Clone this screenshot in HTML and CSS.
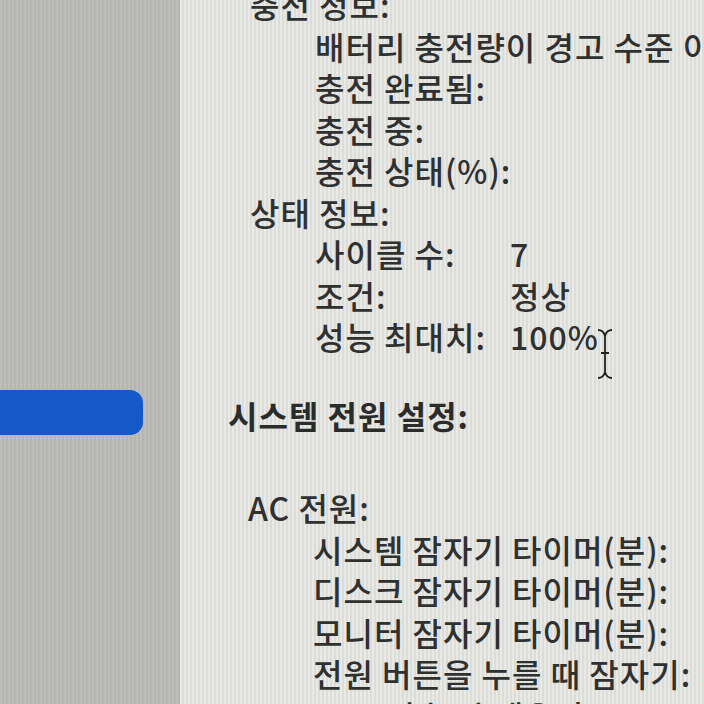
FILE: index.html
```html
<!DOCTYPE html>
<html>
<head>
    <meta charset="utf-8">
    <link rel="stylesheet" href="styles.css">
</head>
<body>
    <div class="window">
        <aside class="sidebar">
            <div class="selected"></div>
        </aside>
        <main class="content">
            <div class="group">
                <div class="head">충전 정보:</div>
                <div class="items">
                    <div class="row">배터리 충전량이 경고 수준 이하:</div>
                    <div class="row">충전 완료됨:</div>
                    <div class="row">충전 중:</div>
                    <div class="row">충전 상태(%):</div>
                </div>
            </div>
            <div class="group">
                <div class="head">상태 정보:</div>
                <div class="items">
                    <div class="row pair"><span class="label">사이클 수:</span><span>7</span></div>
                    <div class="row pair"><span class="label">조건:</span><span>정상</span></div>
                    <div class="row pair"><span class="label">성능 최대치:</span><span class="value-cursor">100%<svg class="cursor" width="18" height="52" viewBox="0 0 18 52"><path d="M2 2 C6 2 8 4 9 8 C10 4 12 2 16 2 M9 8 L9 44 M5 25 L13 25 M2 50 C6 50 8 48 9 44 C10 48 12 50 16 50" fill="none" stroke="#222" stroke-width="1.8"/></svg></span></div>
                </div>
            </div>

            <h3 class="section">시스템 전원 설정:</h3>

            <div class="group power">
                <div class="head">AC 전원:</div>
                <div class="items">
                    <div class="row">시스템 잠자기 타이머(분):</div>
                    <div class="row">디스크 잠자기 타이머(분):</div>
                    <div class="row">모니터 잠자기 타이머(분):</div>
                    <div class="row">전원 버튼을 누를 때 잠자기:</div>
                    <div class="row">LAN 접속 시 깨우기:</div>
                </div>
            </div>
        </main>
    </div>
</body>
</html>
```

FILE: styles.css
```css
  body {
      margin: 0;
      padding: 0;
      width: 704px;
      height: 704px;
      overflow: hidden;
      font-family: "Noto Sans CJK KR", "Noto Sans", sans-serif;
      color: #2f3030;
  }
  .window {
      display: flex;
      height: 704px;
  }
  .sidebar {
      width: 180px;
      flex-shrink: 0;
      background-color: #babbb9;
      background-image: repeating-linear-gradient(90deg, rgba(255,255,255,0.05) 0 2px, rgba(0,0,0,0.03) 2px 4px);
  }
  .selected {
      margin-top: 390px;
      width: 143px;
      height: 45px;
      background-color: #1559c9;
      border-radius: 0 13px 13px 0;
  }
  .content {
      flex: 1;
      background-color: #e4e4e1;
      background-image: repeating-linear-gradient(90deg, rgba(255,255,255,0.18) 0 2px, rgba(0,0,0,0.035) 2px 4px);
      padding-left: 70px;
      margin-top: -16px;
      font-size: 32px;
      font-weight: 500;
      letter-spacing: 1px;
      line-height: 41.5px;
      white-space: nowrap;
      overflow: hidden;
  }
  .items {
      padding-left: 65px;
  }
  .pair {
      display: flex;
  }
  .label {
      width: 195px;
      flex-shrink: 0;
  }
  .value-cursor {
      position: relative;
  }
  .cursor {
      position: absolute;
      left: 86px;
      top: 12px;
  }
  .section {
      margin: 37px 0 0 -22px;
      font-size: 32px;
      font-weight: bold;
      line-height: 41.5px;
      color: #2a2b2b;
  }
  .power {
      margin-top: 51px;
  }
  .power .head {
      margin-left: -2px;
  }
  .power .items {
      padding-left: 63px;
  }
```
